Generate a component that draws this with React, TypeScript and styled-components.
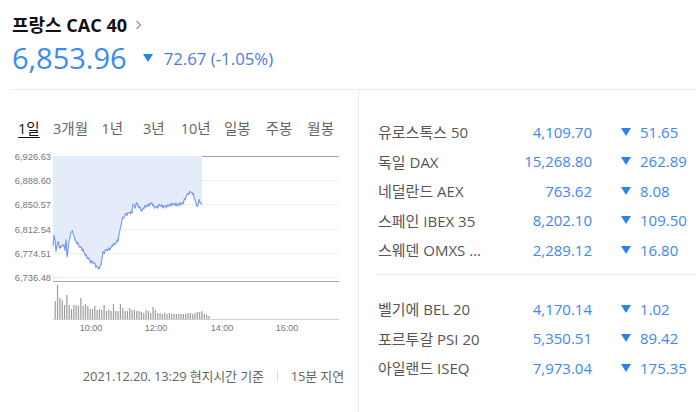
import React from 'react';
import styled, { createGlobalStyle } from 'styled-components';

const GlobalStyle = createGlobalStyle`
  html, body {
    margin: 0;
    padding: 0;
    background: #ffffff;
  }
  body {
    font-family: 'Open Sans', 'Noto Sans CJK KR', sans-serif;
  }
`;

const Page = styled.div`
  width: 696px;
  height: 412px;
  overflow: hidden;
  background: #ffffff;
`;

const Header = styled.div`
  padding: 14px 12px 0;
`;

const Title = styled.div`
  display: flex;
  align-items: center;
  gap: 8px;
  font-size: 18px;
  font-weight: 700;
  line-height: 22px;
  color: #111111;
`;

const PriceRow = styled.div`
  display: flex;
  align-items: center;
  height: 36px;
  margin-top: 4px;
`;

const Price = styled.span`
  font-size: 29px;
  line-height: 36px;
  color: #3a8bf5;
`;

const DownTri = styled.span<{ w: number; h: number }>`
  display: inline-block;
  width: 0;
  height: 0;
  border-left: ${(p) => p.w / 2}px solid transparent;
  border-right: ${(p) => p.w / 2}px solid transparent;
  border-top: ${(p) => p.h}px solid #2b82ea;
`;

const Change = styled.span`
  font-size: 16.8px;
  color: #4b7ce6;
  margin-left: 11px;
`;

const Divider = styled.div`
  margin: 13px 0 0 10px;
  border-top: 1px solid #ececec;
`;

const Body = styled.div`
  display: flex;
  height: 322px;
`;

const LeftPane = styled.div`
  box-sizing: border-box;
  width: 359px;
  border-right: 1px solid #ececec;
`;

const Tabs = styled.div`
  display: grid;
  grid-template-columns: repeat(8, 41.7px);
  margin: 29px 0 0 8px;
`;

const Tab = styled.span<{ active?: boolean }>`
  text-align: center;
  font-size: 14.5px;
  line-height: 20px;
  color: ${(p) => (p.active ? '#111111' : '#666666')};
  text-decoration: ${(p) => (p.active ? 'underline' : 'none')};
  text-underline-offset: 3px;
`;

const ChartSvg = styled.svg`
  display: block;
  margin-top: 9px;
`;

const Footer = styled.div`
  display: flex;
  justify-content: flex-end;
  align-items: center;
  margin-top: 29px;
  padding-right: 14px;
  font-size: 13px;
  line-height: 18px;
  color: #666666;
  letter-spacing: -0.15px;
`;

const FooterSep = styled.span`
  width: 1px;
  height: 12px;
  background: #dddddd;
  margin: 0 13px;
`;

const RightPane = styled.div`
  flex: 1;
  padding: 27px 0 0 17px;
`;

const Row = styled.div`
  display: grid;
  grid-template-columns: 1fr 90px 104px;
  align-items: center;
  height: 29.5px;
  font-size: 15px;
`;

const Name = styled.span`
  padding-left: 2px;
  color: #555555;
  white-space: nowrap;
`;

const Value = styled.span`
  text-align: right;
  color: #3d87f2;
`;

const ChangeCell = styled.span`
  display: flex;
  align-items: center;
  gap: 9px;
  padding-left: 29px;
  color: #3d87f2;
`;

const GroupSep = styled.div`
  margin: 9.5px 0 19px;
  border-top: 1px solid #ececec;
`;

const tabs = ['1일', '3개월', '1년', '3년', '10년', '일봉', '주봉', '월봉'];

const groupA = [
  ['유로스톡스 50', '4,109.70', '51.65'],
  ['독일 DAX', '15,268.80', '262.89'],
  ['네덜란드 AEX', '763.62', '8.08'],
  ['스페인 IBEX 35', '8,202.10', '109.50'],
  ['스웨덴 OMXS ...', '2,289.12', '16.80'],
];

const groupB = [
  ['벨기에 BEL 20', '4,170.14', '1.02'],
  ['포르투갈 PSI 20', '5,350.51', '89.42'],
  ['아일랜드 ISEQ', '7,973.04', '175.35'],
];

// price curve key points, page coordinates
const keys: [number, number][] = [
  [53, 246], [54, 234], [56, 250], [58, 242], [60, 248], [63, 245], [65, 249],
  [66, 240], [67, 257], [69, 242], [71, 232], [73, 232], [75, 240], [77, 243],
  [80, 247], [83, 250], [86, 256], [88, 258], [91, 262], [93, 262], [96, 266],
  [98, 268], [100, 268], [101, 264], [103, 253], [106, 250], [110, 249],
  [113, 245], [115, 244], [118, 240], [120, 230], [122, 220], [125, 215],
  [129, 213], [132, 212], [133, 204], [135, 207], [137, 203], [139, 207],
  [142, 211], [144, 207], [147, 206], [149, 205], [152, 203], [154, 207],
  [157, 207], [160, 205], [163, 207], [167, 206], [170, 205], [173, 204],
  [177, 205], [180, 204], [183, 203], [185, 199], [187, 195], [189, 193],
  [191, 192], [193, 194], [195, 200], [197, 207], [199, 201], [201, 203],
  [202, 204],
];

const buildLine = () => {
  const pts: [number, number][] = [];
  let i = 0;
  for (let k = 0; k < keys.length - 1; k++) {
    const [x0, y0] = keys[k];
    const [x1, y1] = keys[k + 1];
    for (let x = x0; x < x1; x += 0.7) {
      const t = (x - x0) / (x1 - x0);
      const noise = 1.8 * Math.sin(i * 2.7) * Math.cos(i * 1.3);
      pts.push([x, y0 + (y1 - y0) * t + noise]);
      i++;
    }
  }
  pts.push(keys[keys.length - 1]);
  return pts;
};

const linePts = buildLine();
const lineStr = linePts.map(([x, y]) => `${x.toFixed(1)},${y.toFixed(1)}`).join(' ');
const areaStr = `53,156 ${lineStr} 202,156`;

const volumes = [
  18, 34, 21, 19, 14, 24, 14, 10, 14, 14, 13, 21, 13, 15, 13, 10, 10, 13, 9,
  10, 9, 14, 8, 9, 8, 15, 8, 8, 15, 11, 8, 8, 11, 9, 9, 8, 8, 7, 6, 9, 8, 6,
  12, 9, 6, 6, 5, 6, 5, 6, 5, 5, 5, 5, 5, 5, 5, 6, 6, 5, 6, 7, 7, 8, 5, 4, 3,
];

const yLabels: [number, string][] = [
  [156, '6,926.63'],
  [180, '6,888.60'],
  [204, '6,850.57'],
  [229, '6,812.54'],
  [253, '6,774.51'],
  [277, '6,736.48'],
];

const xLabels: [number, string][] = [
  [91, '10:00'],
  [156, '12:00'],
  [222, '14:00'],
  [287, '16:00'],
];

const Chart = () => (
  <ChartSvg width={358} height={190} viewBox="0 148 358 190">
    {yLabels.map(([y, label], idx) => (
      <g key={label}>
        <line
          x1={53}
          x2={339}
          y1={y + 0.5}
          y2={y + 0.5}
          stroke={idx === 0 ? '#a3a3a3' : '#efefef'}
        />
        <text
          x={51}
          y={y + 4}
          textAnchor="end"
          fontSize={9.3}
          fill="#777"
          fontFamily="'Liberation Sans', sans-serif"
        >
          {label}
        </text>
      </g>
    ))}
    <polygon points={areaStr} fill="#e4ecf9" />
    <polyline points={lineStr} fill="none" stroke="#6f97f0" strokeWidth={1.1} strokeLinejoin="round" />
    <line x1={53} x2={339} y1={281.5} y2={281.5} stroke="#a8a8a8" />
    {volumes.map((h, i) => (
      <rect key={i} x={54.6 + i * 2.33} y={319 - h} width={1.2} height={h} fill="#9c9c9c" />
    ))}
    <line x1={53} x2={339} y1={319.5} y2={319.5} stroke="#cfcfcf" />
    {xLabels.map(([x, label]) => (
      <text
        key={label}
        x={x}
        y={331}
        textAnchor="middle"
        fontSize={9}
        fill="#777"
        fontFamily="'Liberation Sans', sans-serif"
      >
        {label}
      </text>
    ))}
  </ChartSvg>
);

const Chevron = () => (
  <svg width="7" height="10" viewBox="0 0 7 10">
    <polyline points="1.5,1 5.5,5 1.5,9" fill="none" stroke="#999" strokeWidth={1.3} />
  </svg>
);

const IndexRow = ({ item }: { item: string[] }) => (
  <Row>
    <Name>{item[0]}</Name>
    <Value>{item[1]}</Value>
    <ChangeCell>
      <DownTri w={10} h={8} />
      {item[2]}
    </ChangeCell>
  </Row>
);

export default function App() {
  return (
    <Page>
      <GlobalStyle />
      <Header>
        <Title>
          프랑스 CAC 40
          <Chevron />
        </Title>
        <PriceRow>
          <Price>6,853.96</Price>
          <DownTri w={10} h={8} style={{ marginLeft: 16 }} />
          <Change>72.67 (-1.05%)</Change>
        </PriceRow>
      </Header>
      <Divider />
      <Body>
        <LeftPane>
          <Tabs>
            {tabs.map((t, i) => (
              <Tab key={t} active={i === 0}>
                {t}
              </Tab>
            ))}
          </Tabs>
          <Chart />
          <Footer>
            2021.12.20. 13:29 현지시간 기준
            <FooterSep />
            15분 지연
          </Footer>
        </LeftPane>
        <RightPane>
          {groupA.map((item) => (
            <IndexRow key={item[0]} item={item} />
          ))}
          <GroupSep />
          {groupB.map((item) => (
            <IndexRow key={item[0]} item={item} />
          ))}
        </RightPane>
      </Body>
    </Page>
  );
}
